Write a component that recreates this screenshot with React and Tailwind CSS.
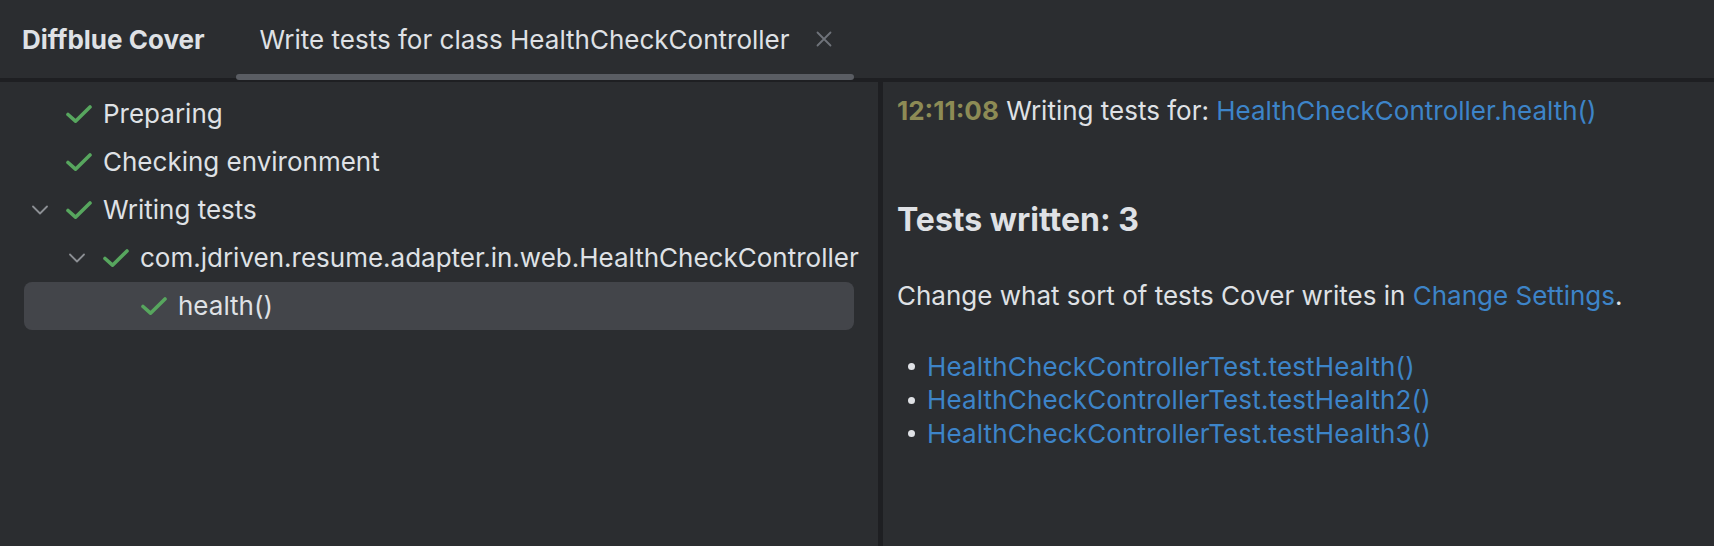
import React from "react";

const font = { fontFamily: "Inter, 'Noto Sans', sans-serif" };

function Check() {
  return (
    <svg width="26" height="18" viewBox="0 0 26 18" className="shrink-0">
      <polyline
        points="2,9.5 9.5,16.2 24,2"
        fill="none"
        stroke="#57a65e"
        strokeWidth="3.6"
        strokeLinecap="round"
        strokeLinejoin="round"
      />
    </svg>
  );
}

function Chevron() {
  return (
    <svg width="16" height="10" viewBox="0 0 16 10" className="shrink-0">
      <polyline
        points="1,1.5 8,8.5 15,1.5"
        fill="none"
        stroke="#8c8f94"
        strokeWidth="1.8"
        strokeLinecap="round"
        strokeLinejoin="round"
      />
    </svg>
  );
}

function Row({ depth, expandable, label, selected }) {
  const indents = ["pl-0", "pl-[37px]", "pl-[75px]"];
  return (
    <div
      className={`h-12 flex items-center rounded-[8px] ${
        selected ? "bg-[#43454a]" : ""
      }`}
    >
      <div className={`flex items-center ${indents[depth]}`}>
        <div className="w-[42px] pl-2 flex items-center">
          {expandable ? <Chevron /> : null}
        </div>
        <Check />
        <span className="ml-[11px] text-[26px] leading-[32px] text-[#dfe1e5] whitespace-nowrap">
          {label}
        </span>
      </div>
    </div>
  );
}

export default function App() {
  const links = [
    "HealthCheckControllerTest.testHealth()",
    "HealthCheckControllerTest.testHealth2()",
    "HealthCheckControllerTest.testHealth3()",
  ];
  return (
    <div className="w-[1714px] h-[546px] bg-[#2b2d30] flex flex-col overflow-hidden" style={font}>
      {/* Header */}
      <div className="h-[82px] border-b-4 border-[#1e1f22] flex items-center shrink-0">
        <div className="pl-[22px] pr-[31px] text-[26px] font-bold text-[#dfe1e5] whitespace-nowrap">
          Diffblue Cover
        </div>
        <div className="relative h-full flex items-center pl-6 pr-[22px]">
          <span className="text-[26px] text-[#dfe1e5] whitespace-nowrap">
            Write tests for class HealthCheckController
          </span>
          <svg width="16" height="16" viewBox="0 0 16 16" className="ml-[26px]">
            <path d="M1.5 1.5 L14.5 14.5 M14.5 1.5 L1.5 14.5" stroke="#6f737a" strokeWidth="1.8" strokeLinecap="round" />
          </svg>
          <div className="absolute left-0 right-0 bottom-[-2px] h-[6px] rounded-full bg-[#5a5d63]" />
        </div>
      </div>

      {/* Body */}
      <div className="flex flex-1 min-h-0">
        <div className="w-[878px] shrink-0 pt-2 px-6 flex flex-col">
          <Row depth={0} label="Preparing" />
          <Row depth={0} label="Checking environment" />
          <Row depth={0} expandable label="Writing tests" />
          <Row depth={1} expandable label="com.jdriven.resume.adapter.in.web.HealthCheckController" />
          <Row depth={2} label="health()" selected />
        </div>
        <div className="w-[5px] shrink-0 bg-[#1e1f22]" />
        <div className="flex-1 pl-[14px] pt-[13px] text-[#dfe1e5]">
          <div className="text-[26px] leading-[32px] whitespace-nowrap">
            <span className="font-bold text-[#8d8b55]">12:11:08</span>{" "}
            Writing tests for:{" "}
            <span className="text-[#3d84c8]">HealthCheckController.health()</span>
          </div>
          <div className="mt-[73px] text-[32px] leading-[40px] font-bold">
            Tests written: 3
          </div>
          <div className="mt-[40px] text-[26px] leading-[32px] whitespace-nowrap">
            Change what sort of tests Cover writes in{" "}
            <span className="text-[#3d84c8]">Change Settings</span>.
          </div>
          <ul className="mt-[38px]">
            {links.map((l) => (
              <li key={l} className="flex items-center h-[33.5px]">
                <span className="ml-[11px] mr-[12px] w-[7px] h-[7px] rounded-full bg-[#dfe1e5] shrink-0" />
                <span className="text-[26px] leading-[32px] tracking-[0.15px] text-[#3d84c8] whitespace-nowrap">{l}</span>
              </li>
            ))}
          </ul>
        </div>
      </div>
    </div>
  );
}
